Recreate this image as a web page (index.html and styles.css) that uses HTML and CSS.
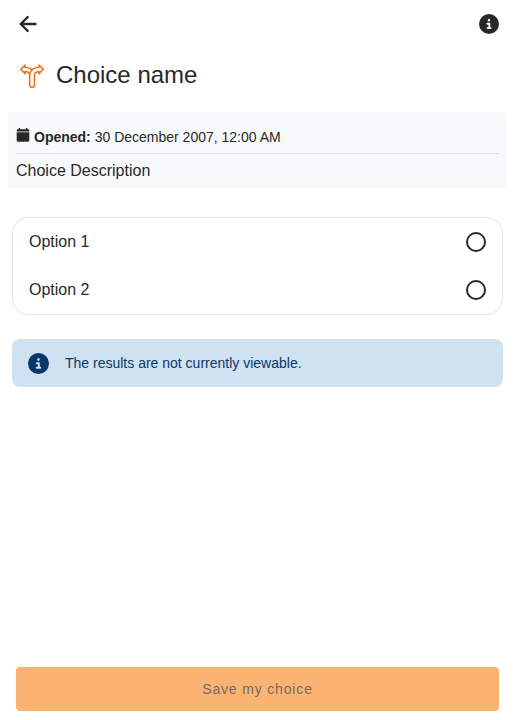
FILE: index.html
```html
<!DOCTYPE html>
<html lang="en">
<head>
<meta charset="utf-8">
<title>Choice name</title>
<link rel="stylesheet" href="styles.css">
</head>
<body>
<svg class="symbols" width="0" height="0" aria-hidden="true">
  <symbol id="info" viewBox="0 0 512 512"><path d="M256 512A256 256 0 1 0 256 0a256 256 0 1 0 0 512zM216 336h24V272H216c-13.3 0-24-10.7-24-24s10.7-24 24-24h48c13.3 0 24 10.7 24 24v88h8c13.3 0 24 10.7 24 24s-10.7 24-24 24H216c-13.3 0-24-10.7-24-24s10.7-24 24-24zm40-208a32 32 0 1 1 0 64 32 32 0 1 1 0-64z"/></symbol>
</svg>
<header class="toolbar">
  <svg class="icon-20 back" viewBox="0 0 20 20"><path d="M9.700 3 2.700 10 9.700 17M2.700 10H17.500"/></svg>
  <svg class="icon-20"><use href="#info"/></svg>
</header>
<div class="title">
  <svg class="title-icon" viewBox="0 0 24 24">
    <path d="M9.7 11.2C9.4 9 7.8 7.6 5.1 7.5V9.7L.8 5.3 5.1 1V3.4C8 3.300 10.500 4.200 12 6C13.500 4.200 16 3.300 18.900 3.400V1L23.200 5.300 18.900 9.700V7.500C16.200 7.600 14.400 9 14.400 11.800V21C14.400 22.500 13.400 23.300 12.050 23.300S9.700 22.500 9.700 21V11.200C9.700 9 10.500 7.300 12 6"/>
  </svg>
  <h1>Choice name</h1>
</div>
<section class="summary">
  <p class="dates">
    <svg class="calendar" viewBox="0 0 14 15"><path d="M2.700 1h1.500v1.300h5.600V1h1.500v1.300h.700q1.300 0 1.300 1.300v.900H.7v-.9q0-1.300 1.300-1.300h.7zM.7 5.300h12.600v8.200q0 1.300-1.300 1.300H2Q.7 14.800.7 13.500z"/></svg>
    <span><strong>Opened:</strong> 30 December 2007, 12:00 AM</span>
  </p>
  <p class="description">Choice Description</p>
</section>
<section class="options">
  <label class="option">Option 1<input type="radio" name="choice"></label>
  <label class="option">Option 2<input type="radio" name="choice"></label>
</section>
<div class="notice">
  <svg class="notice-icon"><use href="#info"/></svg>
  <span>The results are not currently viewable.</span>
</div>
<button class="save" disabled>Save my choice</button>
</body>
</html>
```
FILE: styles.css
```css
* { box-sizing: border-box; }
body {
  margin: 0;
  min-height: 720px;
  display: flex;
  flex-direction: column;
  background: #fff;
  color: #282828;
  font: 16px/24px "Liberation Sans", Arial, sans-serif;
}
svg { display: block; flex: none; fill: #282828; }
.symbols { position: absolute; }
h1, p { margin: 0; }
.toolbar {
  display: flex;
  align-items: center;
  justify-content: space-between;
  height: 48px;
  padding: 0 16px 0 18px;
}
.icon-20 { width: 20px; height: 20px; }
.back {
  fill: none;
  stroke: #282828;
  stroke-width: 2.4;
  stroke-linecap: round;
  stroke-linejoin: round;
}
.title {
  display: flex;
  align-items: center;
  gap: 12px;
  height: 56px;
  padding: 0 20px;
}
.title-icon {
  width: 24px;
  height: 24px;
  fill: none;
  stroke: #f0690a;
  stroke-width: 1.45;
  stroke-linejoin: round;
}
h1 { font-size: 24px; line-height: 32px; font-weight: 400; padding-bottom: 2px; }
.summary {
  height: 76px;
  margin: 8px 8px 0;
  padding: 8px;
  border-radius: 4px;
  background: #f8f9fa;
}
.dates {
  display: flex;
  align-items: center;
  gap: 4px;
  height: 34px;
  border-bottom: 1px solid #dee2e6;
  font-size: 14px;
}
.calendar { width: 14px; height: 15px; margin: 0 0 4px; }
.description { padding-top: 5px; }
.options {
  height: 98px;
  margin: 29px 12px 0;
  border: 1px solid #dee2e6;
  border-radius: 16px;
}
.option {
  display: flex;
  align-items: center;
  justify-content: space-between;
  height: 48px;
  padding: 0 16px;
}
.option input {
  appearance: none;
  width: 20px;
  height: 20px;
  margin: 0;
  border: 2px solid #282828;
  border-radius: 50%;
}
.notice {
  display: flex;
  align-items: center;
  gap: 16px;
  height: 48px;
  margin: 24px 12px 0;
  padding: 0 16px;
  border-radius: 8px;
  background: #cfe2f2;
  color: #093768;
  font-size: 14px;
}
.notice-icon { width: 21px; height: 21px; fill: #093768; }
.save {
  height: 44px;
  margin: auto 16px 9px;
  padding: 0;
  border: 0;
  border-radius: 4px;
  background: #fcb271;
  color: #766b62;
  font: 14px "Liberation Sans", Arial, sans-serif;
  letter-spacing: 0.84px;
}
```
